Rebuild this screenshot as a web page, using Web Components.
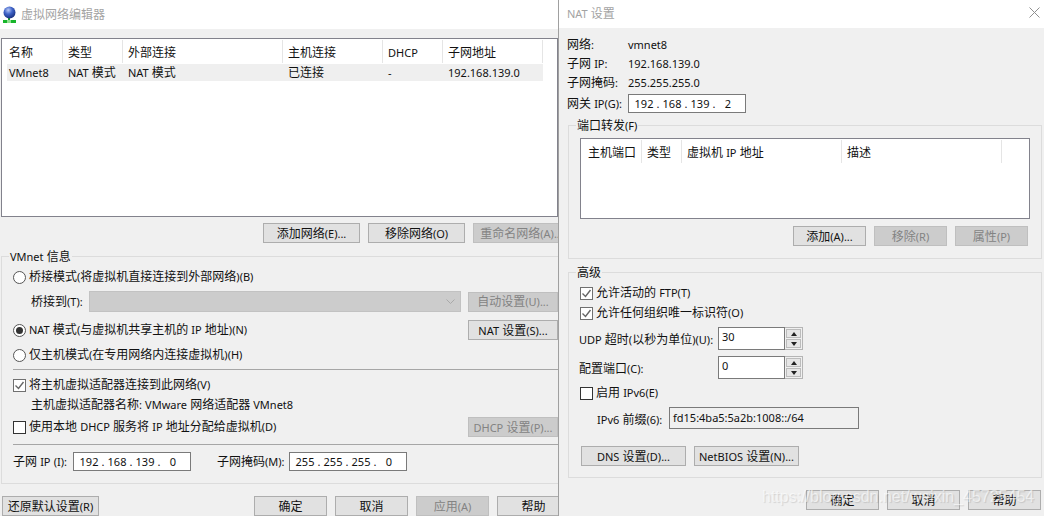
<!DOCTYPE html>
<html lang="zh">
<head>
  <meta charset="UTF-8">
  <title>虚拟网络编辑器</title>
  <style>
    html, body { margin: 0; height: 100%; }
    body {
      width: 1044px; height: 516px; overflow: hidden; display: flex; position: relative; background: #f0f0f0;
      font: 12px/16px "Noto Sans", "Noto Sans CJK SC", sans-serif; color: #111;
    }
    .lat { font-size: 11px; }
  </style>
</head>
<body>
  <!-- 左边：虚拟网络编辑器 -->
  <vm-window title-text="虚拟网络编辑器" width="558" head="29" icon divider>
    <list-view style="margin:9px 0 0 1px;width:557px;height:179px" columns="名称:56,类型:60,外部连接:160,主机连接:100,DHCP:60,子网地址:100" row="VMnet8|NAT 模式|NAT 模式|已连接|-|192.168.139.0"></list-view>
    <form-row style="margin:6px 0 0 263px;gap:8px;height:20px">
      <vm-button w="97">添加网络(E)...</vm-button>
      <vm-button w="97">移除网络(O)</vm-button>
      <vm-button w="97" disabled>重命名网络(A)...</vm-button>
    </form-row>
    <group-box label="VMnet 信息" style="margin:13px 0 0 1px;width:557px;--open-right:0;--pad:10px 0 12px 11px">
      <form-row style="height:20px"><vm-radio>桥接模式(将虚拟机直接连接到外部网络)(B)</vm-radio></form-row>
      <form-row style="margin-top:4px;height:21px;padding-left:18px">
        <span style="width:58px">桥接到(T):</span>
        <drop-down w="372"></drop-down>
        <vm-button w="90" h="20" disabled style="margin-left:7px">自动设置(U)...</vm-button>
      </form-row>
      <form-row style="margin-top:8px;height:20px;justify-content:space-between">
        <vm-radio checked>NAT 模式(与虚拟机共享主机的 IP 地址)(N)</vm-radio>
        <vm-button w="90" h="20">NAT 设置(S)...</vm-button>
      </form-row>
      <form-row style="margin-top:5px;height:20px"><vm-radio>仅主机模式(在专用网络内连接虚拟机)(H)</vm-radio></form-row>
      <h-line style="margin-top:4px"></h-line>
      <form-row style="margin-top:5px;height:20px"><vm-check checked>将主机虚拟适配器连接到此网络(V)</vm-check></form-row>
      <form-row style="height:19px;padding-left:18px"><span>主机虚拟适配器名称: VMware 网络适配器 VMnet8</span></form-row>
      <form-row style="margin-top:3px;height:20px;justify-content:space-between">
        <vm-check>使用本地 DHCP 服务将 IP 地址分配给虚拟机(D)</vm-check>
        <vm-button w="90" h="20" disabled>DHCP 设置(P)...</vm-button>
      </form-row>
      <h-line style="margin-top:7px"></h-line>
      <form-row style="margin-top:7px;height:19px">
        <span style="width:60px;padding-top:1px">子网 IP (I):</span>
        <ip-field value="192.168.139.0"></ip-field>
        <span style="margin-left:26px;width:72px;padding-top:1px">子网掩码(M):</span>
        <ip-field value="255.255.255.0"></ip-field>
      </form-row>
    </group-box>
    <form-row style="margin:12px 0 0 2px;height:20px;gap:8px">
      <vm-button w="97" style="margin-right:147px">还原默认设置(R)</vm-button>
      <vm-button w="73">确定</vm-button>
      <vm-button w="73">取消</vm-button>
      <vm-button w="73" disabled>应用(A)</vm-button>
      <vm-button w="73">帮助</vm-button>
    </form-row>
  </vm-window>

  <!-- 右边：NAT 设置 -->
  <vm-window title-text="NAT 设置" width="485" head="28" closable>
    <div style="padding:7px 0 0 8px">
      <form-row style="height:19px"><span style="width:61px">网络:</span><span>vmnet8</span></form-row>
      <form-row style="height:19px"><span style="width:61px">子网 IP:</span><span>192.168.139.0</span></form-row>
      <form-row style="height:19px"><span style="width:61px">子网掩码:</span><span>255.255.255.0</span></form-row>
      <form-row style="margin-top:2px;height:19px"><span style="width:61px">网关 IP(G):</span><ip-field value="192.168.139.2"></ip-field></form-row>
    </div>
    <group-box label="端口转发(F)" style="margin:12px 0 0 9px;width:474px;--pad:12px 13px 12px 11px">
      <list-view style="width:450px;height:81px" columns="主机端口:56,类型:40,虚拟机 IP 地址:160,描述:160"></list-view>
      <form-row style="margin-top:7px;height:20px;gap:8px;justify-content:flex-end">
        <vm-button w="73">添加(A)...</vm-button>
        <vm-button w="73" disabled>移除(R)</vm-button>
        <vm-button w="73" disabled>属性(P)</vm-button>
      </form-row>
    </group-box>
    <group-box label="高级" style="margin:13px 0 0 9px;width:474px;--pad:10px 13px 11px 11px">
      <form-row style="height:20px"><vm-check checked>允许活动的 FTP(T)</vm-check></form-row>
      <form-row style="height:20px"><vm-check checked>允许任何组织唯一标识符(O)</vm-check></form-row>
      <form-row style="margin-top:4px;height:23px">
        <span style="width:139px;margin-left:-1px;padding-top:2px">UDP 超时(以秒为单位)(U):</span>
        <spin-field value="30"></spin-field>
      </form-row>
      <form-row style="margin-top:6px;height:23px">
        <span style="width:139px;margin-left:-1px;padding-top:2px">配置端口(C):</span>
        <spin-field value="0"></spin-field>
      </form-row>
      <form-row style="margin-top:4px;height:20px"><vm-check>启用 IPv6(E)</vm-check></form-row>
      <form-row style="margin-top:4px;height:22px;padding-left:17px">
        <span style="width:72px;padding-top:3px">IPv6 前缀(6):</span>
        <text-box w="190">fd15:4ba5:5a2b:1008::/64</text-box>
      </form-row>
      <form-row style="margin-top:17px;height:20px;gap:8px;padding-left:1px">
        <vm-button w="105">DNS 设置(D)...</vm-button>
        <vm-button w="105">NetBIOS 设置(N)...</vm-button>
      </form-row>
    </group-box>
    <form-row style="margin:12px 0 0 247px;height:20px;gap:8px">
      <vm-button w="73">确定</vm-button>
      <vm-button w="73">取消</vm-button>
      <vm-button w="73">帮助</vm-button>
    </form-row>
  </vm-window>

  <water-mark>https://blog.csdn.net/weixin_45725454</water-mark>

  <script>
    // 西文比中文窄一号：ASCII 串单独包一层
    const lat = s => s.replace(/[!-~]+/g, m => `<span class="lat">${m}</span>`)
    const latStyle = '.lat { font-size: 11px; }'

    const walker = document.createTreeWalker(document.body, NodeFilter.SHOW_TEXT)
    const nodes = []
    while (walker.nextNode()) {
      const p = walker.currentNode.parentNode.nodeName
      if (p !== 'SCRIPT' && p !== 'STYLE' && p !== 'WATER-MARK' && walker.currentNode.data.trim()) nodes.push(walker.currentNode)
    }
    nodes.forEach(n => {
      const t = document.createElement('template')
      t.innerHTML = lat(n.data)
      n.replaceWith(t.content)
    })

    // 小工具：建 shadow 并写入内容
    class Base extends HTMLElement {
      render(html) {
        this.attachShadow({ mode: 'open' }).innerHTML = html
      }
    }

    class VmWindow extends Base {
      connectedCallback() {
        const icon = this.hasAttribute('icon') ? `
          <svg width="14" height="17" viewBox="0 0 14 17">
            <defs><radialGradient id="g" cx=".4" cy=".3" r=".75">
              <stop offset="0" stop-color="#b9c9f5"/><stop offset=".45" stop-color="#3f63c8"/><stop offset="1" stop-color="#152a78"/>
            </radialGradient></defs>
            <rect x="6" y="11" width="2" height="3" fill="#1d9a2b"/>
            <rect x="1" y="14" width="13" height="3" fill="#17b52a"/>
            <rect x="5" y="14" width="4" height="3" fill="#8fe08f"/>
            <circle cx="7.5" cy="6.5" r="6" fill="url(#g)"/>
          </svg>` : ''
        const close = this.hasAttribute('closable') ? `
          <svg class="close" width="11" height="11" viewBox="0 0 11 11"><path d="M.5.5l10 10M10.5.5l-10 10" stroke="#8f8f8f" fill="none"/></svg>` : ''
        this.render(`
          <style>
            ${latStyle}
            :host {
              display: block; flex: none; box-sizing: border-box; overflow: hidden; position: relative;
              width: ${this.getAttribute('width')}px; height: 516px; background: #f0f0f0;
              ${this.hasAttribute('divider') ? 'box-sizing: content-box; border-right: 1px solid #a0a0a0;' : ''}
            }
            .head {
              height: ${this.getAttribute('head')}px; background: #fff; color: #a3a3a3;
              display: flex; align-items: center; box-sizing: border-box;
              padding: 0 3px 0 ${this.hasAttribute('icon') ? 2 : 8}px; gap: 5px;
            }
            .close { margin-left: auto; margin-top: -4px; margin-right: 1px; }
          </style>
          <div class="head">${icon}<span>${lat(this.getAttribute('title-text'))}</span>${close}</div>
          <slot></slot>`)
      }
    }

    class FormRow extends Base {
      connectedCallback() {
        this.render(`<style>:host { display: flex; align-items: center; white-space: nowrap; }</style><slot></slot>`)
      }
    }

    class HLine extends Base {
      connectedCallback() {
        this.render(`<style>:host { display: block; height: 1px; background: #a6a6a6; }</style>`)
      }
    }

    class GroupBox extends Base {
      connectedCallback() {
        this.render(`
          <style>
            ${latStyle}
            :host {
              display: block; position: relative; box-sizing: border-box; padding: var(--pad);
              border: 1px solid #dcdcdc; border-right-width: var(--open-right, 1px);
            }
            .legend { position: absolute; left: 7px; top: -6px; padding: 0 1px; background: #f0f0f0; line-height: 12px; }
          </style>
          <div class="legend">${lat(this.getAttribute('label'))}</div>
          <slot></slot>`)
      }
    }

    class VmButton extends Base {
      connectedCallback() {
        const off = this.hasAttribute('disabled')
        this.render(`
          <style>
            :host {
              display: flex; flex: none; align-items: center; justify-content: center; box-sizing: border-box; overflow: hidden; white-space: nowrap;
              width: ${this.getAttribute('w')}px; height: ${this.getAttribute('h') || 20}px; padding-top: 1px;
              background: ${off ? '#cccccc' : '#e1e1e1'}; border: 1px solid ${off ? '#bfbfbf' : '#adadad'}; color: ${off ? '#838383' : '#111'};
            }
          </style>
          <span><slot></slot></span>`)
      }
    }

    class VmRadio extends Base {
      connectedCallback() {
        const dot = this.hasAttribute('checked') ? '<circle cx="6.5" cy="6.5" r="3.5" fill="#333"/>' : ''
        this.render(`
          <style>
            :host { display: inline-flex; align-items: center; gap: 3px; white-space: nowrap; }
            svg { flex: none; }
          </style>
          <svg width="13" height="13" viewBox="0 0 13 13"><circle cx="6.5" cy="6.5" r="6" fill="#fff" stroke="#555"/>${dot}</svg>
          <span><slot></slot></span>`)
      }
    }

    class VmCheck extends Base {
      connectedCallback() {
        const on = this.hasAttribute('checked')
        const tick = on ? '<path d="M2.5 6.5l3 3 5-6.5" fill="none" stroke="#666" stroke-width="1.4"/>' : ''
        this.render(`
          <style>
            :host { display: inline-flex; align-items: center; gap: 3px; white-space: nowrap; }
            svg { flex: none; }
          </style>
          <svg width="13" height="13" viewBox="0 0 13 13"><rect x=".5" y=".5" width="12" height="12" fill="#fff" stroke="${on ? '#707070' : '#333'}"/>${tick}</svg>
          <span><slot></slot></span>`)
      }
    }

    class DropDown extends Base {
      connectedCallback() {
        this.render(`
          <style>
            :host {
              display: flex; flex: none; align-items: center; justify-content: flex-end; box-sizing: border-box;
              width: ${this.getAttribute('w')}px; height: 21px; background: #cccccc; border: 1px solid #c2c2c2; padding-right: 5px;
            }
          </style>
          <svg width="9" height="6" viewBox="0 0 9 6"><path d="M.5.5l4 4 4-4" fill="none" stroke="#a9a9a9"/></svg>`)
      }
    }

    class IpField extends Base {
      connectedCallback() {
        const parts = this.getAttribute('value').split('.')
        const cells = parts.map(p => `<b>${p}</b>`).join('<i>.</i>')
        this.render(`
          <style>
            :host {
              display: flex; flex: none; align-items: center; box-sizing: border-box; font-size: 11px;
              width: 118px; height: 19px; background: #fff; border: 1px solid #7a7a7a; padding: 1px 0 0 3px;
            }
            b { width: 24px; text-align: center; font-weight: normal; }
            i { width: 4px; text-align: center; font-style: normal; }
          </style>
          ${cells}`)
      }
    }

    class SpinField extends Base {
      connectedCallback() {
        this.render(`
          <style>
            :host { display: flex; flex: none; width: 85px; height: 23px; font-size: 11px; }
            .box { flex: 1; background: #fff; border: 1px solid #7a7a7a; padding: 1px 0 0 3px; box-sizing: border-box; }
            .arrows { width: 18px; display: flex; flex-direction: column; gap: 1px; box-sizing: border-box; padding: 1px; border: 1px solid #b5b5b5; border-left: 0; }
            .arrows span { flex: 1; display: flex; align-items: center; justify-content: center; background: #e6e6e6; border: 1px solid #bcbcbc; }
            .up { border: 3px solid transparent; border-top: 0; border-bottom: 4px solid #222; }
            .down { border: 3px solid transparent; border-bottom: 0; border-top: 4px solid #222; }
          </style>
          <div class="box">${this.getAttribute('value')}</div>
          <div class="arrows"><span><div class="up"></div></span><span><div class="down"></div></span></div>`)
      }
    }

    class TextBox extends Base {
      connectedCallback() {
        this.render(`
          <style>
            :host {
              display: block; flex: none; box-sizing: border-box; width: ${this.getAttribute('w')}px; height: 22px;
              background: #f0f0f0; border: 1px solid #7a7a7a; padding: 2px 0 0 3px;
            }
          </style>
          <slot></slot>`)
      }
    }

    class ListView extends Base {
      connectedCallback() {
        const cols = this.getAttribute('columns').split(',').map(c => c.split(':'))
        const tpl = cols.map(c => c[1] + 'px').join(' ')
        const head = cols.map(c => `<div class="h">${lat(c[0])}</div>`).join('')
        const row = this.getAttribute('row')
        const cells = row ? `<div class="row">${row.split('|').map(t => `<div>${lat(t)}</div>`).join('')}</div>` : ''
        this.render(`
          <style>
            ${latStyle}
            :host { display: block; box-sizing: border-box; background: #fff; border: 1px solid #82828c; padding: 1px 0 0 5px; overflow: hidden; }
            .head, .row { display: grid; grid-template-columns: ${tpl}; width: max-content; white-space: nowrap; }
            .head { height: 24px; }
            .h { line-height: 25px; height: 23px; padding-left: 5px; border-right: 1px solid #e5e5e5; }
            .row { height: 17px; line-height: 18px; background: #efefef; }
            .row div { padding-left: 5px; }
            .h:first-child, .row div:first-child { padding-left: 2px; }
          </style>
          <div class="head">${head}</div>${cells}`)
      }
    }

    class WaterMark extends Base {
      connectedCallback() {
        this.render(`
          <style>
            :host {
              position: absolute; left: 762px; top: 487px; pointer-events: none; white-space: nowrap;
              font: 16px/20px "Liberation Sans", sans-serif; color: rgba(255,255,255,.6);
              text-shadow: 1px 1px 1px rgba(0,0,0,.12);
            }
          </style>
          <slot></slot>`)
      }
    }

    customElements.define('vm-window', VmWindow)
    customElements.define('form-row', FormRow)
    customElements.define('h-line', HLine)
    customElements.define('group-box', GroupBox)
    customElements.define('vm-button', VmButton)
    customElements.define('vm-radio', VmRadio)
    customElements.define('vm-check', VmCheck)
    customElements.define('drop-down', DropDown)
    customElements.define('ip-field', IpField)
    customElements.define('spin-field', SpinField)
    customElements.define('text-box', TextBox)
    customElements.define('list-view', ListView)
    customElements.define('water-mark', WaterMark)
  </script>
</body>
</html>
